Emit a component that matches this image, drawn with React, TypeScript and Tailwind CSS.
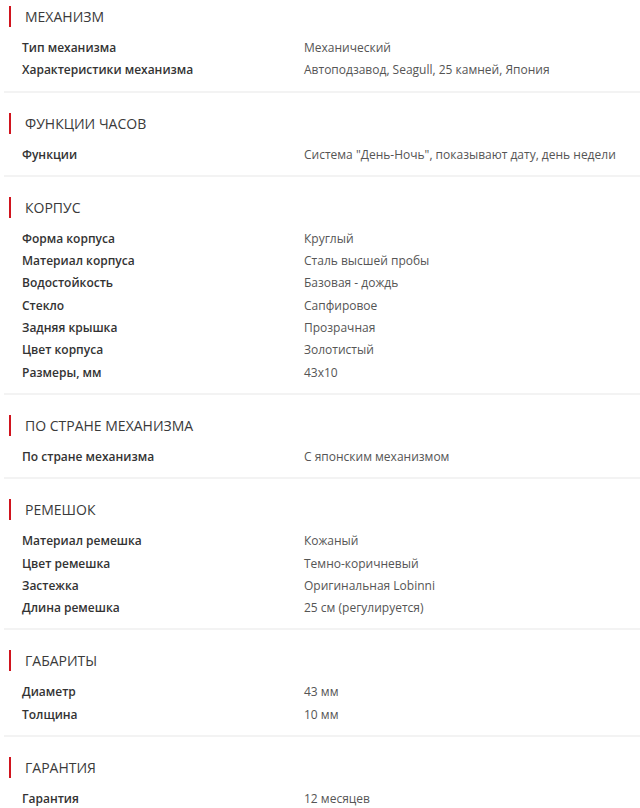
const sections: { title: string; rows: [string, string][] }[] = [
  {
    title: 'Механизм',
    rows: [
      ['Тип механизма', 'Механический'],
      ['Характеристики механизма', 'Автоподзавод, Seagull, 25 камней, Япония'],
    ],
  },
  {
    title: 'Функции часов',
    rows: [['Функции', 'Система "День-Ночь", показывают дату, день недели']],
  },
  {
    title: 'Корпус',
    rows: [
      ['Форма корпуса', 'Круглый'],
      ['Материал корпуса', 'Сталь высшей пробы'],
      ['Водостойкость', 'Базовая - дождь'],
      ['Стекло', 'Сапфировое'],
      ['Задняя крышка', 'Прозрачная'],
      ['Цвет корпуса', 'Золотистый'],
      ['Размеры, мм', '43x10'],
    ],
  },
  {
    title: 'По стране механизма',
    rows: [['По стране механизма', 'С японским механизмом']],
  },
  {
    title: 'Ремешок',
    rows: [
      ['Материал ремешка', 'Кожаный'],
      ['Цвет ремешка', 'Темно-коричневый'],
      ['Застежка', 'Оригинальная Lobinni'],
      ['Длина ремешка', '25 см (регулируется)'],
    ],
  },
  {
    title: 'Габариты',
    rows: [
      ['Диаметр', '43 мм'],
      ['Толщина', '10 мм'],
    ],
  },
  {
    title: 'Гарантия',
    rows: [['Гарантия', '12 месяцев']],
  },
]

export default function App() {
  return (
    <div className="min-h-[808px] bg-white pl-1 font-['Open_Sans',sans-serif]">
      {sections.map((s, i) => (
        <div
          key={s.title}
          className={
            i === 0
              ? 'pt-[6px] pb-[9px] border-b-2 border-[#f3f3f3]'
              : i === sections.length - 1
                ? 'pt-[20px] pb-[9px]'
                : 'pt-[20px] pb-[9px] border-b-2 border-[#f3f3f3]'
          }
        >
          <div className="ml-[5px] flex h-[21px] items-center border-l-2 border-[#d0141e] pl-[14px] text-[14px] uppercase text-[#3a3a3a]">
            {s.title}
          </div>
          <div className="mt-[10px] pl-[18px]">
            {s.rows.map(([k, v]) => (
              <div key={k} className="grid grid-cols-[282px_1fr] text-[12px] leading-[22.3px]">
                <span className="font-semibold text-[#333]">{k}</span>
                <span className="text-[#555]">{v}</span>
              </div>
            ))}
          </div>
        </div>
      ))}
    </div>
  )
}
